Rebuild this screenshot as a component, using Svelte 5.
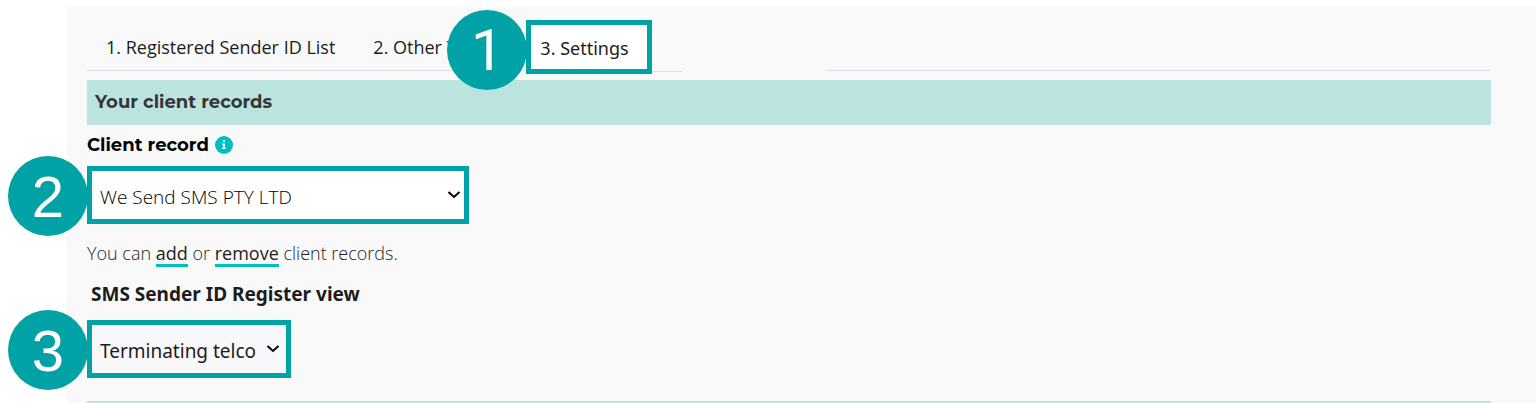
<script>
    let client = 'We Send SMS PTY LTD';
    let view = 'Terminating telco';

    const tabs = ['1. Registered Sender ID List', '2. Other T'];
</script>

<main>
    <nav>
        {#each tabs as tab}
            <button class="tab" type="button">{tab}</button>
        {/each}
        <div class="step">
            <span class="badge narrow">1</span>
            <button class="tab active" type="button">3. Settings</button>
        </div>
        <span class="line short"></span>
        <span class="line"></span>
    </nav>

    <h2>Your client records</h2>

    <div class="label">
        <label for="client">Client record</label>
        <svg width="18" height="18" viewBox="0 0 18 18" role="img" aria-label="Information">
            <circle cx="9" cy="9" r="9" fill="#00bfc0" />
            <path d="M8 4h2v2H8zM7 7.5h3v4.3h1V13H7v-1.2h1V8.7H7z" fill="#e8fafa" />
        </svg>
    </div>

    <div class="step client">
        <span class="badge">2</span>
        <select id="client" bind:value={client}>
            <option>We Send SMS PTY LTD</option>
        </select>
        <svg class="chevron" width="14" height="10" viewBox="0 0 14 10">
            <path d="M1.5 2l5.5 5 5.5-5" />
        </svg>
    </div>

    <p>You can <a href="#add">add</a> or <a href="#remove">remove</a> client records.</p>

    <label class="viewlabel" for="view">SMS Sender ID Register view</label>

    <div class="step view">
        <span class="badge">3</span>
        <select id="view" bind:value={view}>
            <option>Terminating telco</option>
        </select>
        <svg class="chevron" width="14" height="10" viewBox="0 0 14 10">
            <path d="M1.5 2l5.5 5 5.5-5" />
        </svg>
    </div>

    <hr />
</main>

<style>
    :global(body) {
        background: #fff;
    }

    main {
        margin: 7px 0 0 67px;
        padding: 13px 45px 0 20px;
        background: #f9f9f9;
        color: #1c1c1c;
        font-family: "Open Sans", "Noto Sans", sans-serif;
        font-size: 18px;
        line-height: 24px;
    }

    nav {
        display: flex;
        align-items: flex-start;
        height: 60px;
    }

    .tab {
        height: 51px;
        padding: 4px 19px 0;
        border: 0;
        border-bottom: 1px solid #dedee6;
        background: none;
        color: inherit;
        font: inherit;
        white-space: nowrap;
    }

    nav > .tab:nth-child(2) {
        width: 172px;
        text-align: left;
    }

    .step {
        position: relative;
        z-index: 0;
        width: fit-content;
    }

    .tab.active {
        display: block;
        width: 126px;
        height: 54px;
        padding: 2px 0 0 9px;
        border: 5px solid #00a2a6;
        background: #fff;
        font-family: "Noto Sans", sans-serif;
        text-align: left;
    }

    /* numbered circle hanging off the left edge of the outlined control */
    .badge {
        position: absolute;
        z-index: -1;
        top: -10px;
        right: calc(100% - 1px);
        width: 80px;
        height: 80px;
        border-radius: 50%;
        background: #00a2a6;
        color: #fff;
        font-family: "Liberation Sans", Arial, sans-serif;
        font-size: 58px;
        line-height: 82px;
        text-align: center;
    }

    .badge.narrow {
        font-family: Roboto, sans-serif;
        line-height: 80px;
    }

    .line {
        flex: 1;
        height: 50px;
        border-bottom: 1px solid #dedee6;
    }

    .line.short {
        flex: none;
        width: 30px;
        height: 51px;
        margin-right: 144px;
    }

    h2 {
        margin: 0;
        padding: 0 8px;
        background: #bbe4e1;
        color: #363636;
        font-family: Montserrat, Inter, sans-serif;
        font-size: 18px;
        font-weight: 700;
        line-height: 45px;
    }

    .label {
        display: flex;
        align-items: center;
        gap: 6px;
        height: 39px;
        margin-bottom: 2px;
        color: #000;
        font-family: Montserrat, Inter, sans-serif;
        font-weight: 700;
    }

    select {
        display: block;
        width: 100%;
        height: 58px;
        padding: 4px 32px 0 8px;
        border: 5px solid #00a2a6;
        border-radius: 0;
        background: #fff;
        color: #000;
        font: inherit;
        font-size: 19px;
        font-weight: 300;
        appearance: none;
    }

    .client {
        width: 382px;
    }

    .view {
        width: 204px;
    }

    .view select {
        padding-right: 24px;
        background: #f8f7fa;
        color: #1c1c1c;
        font-family: "Noto Sans", sans-serif;
        font-weight: 400;
    }

    .chevron {
        position: absolute;
        top: 24px;
        right: 8px;
        fill: none;
        stroke: #000;
        stroke-width: 2;
        pointer-events: none;
    }

    .view .chevron {
        right: 11px;
    }

    p {
        margin: 17px 0 15px;
        font-weight: 300;
    }

    a {
        display: inline-block;
        border-bottom: 3px solid #00bfc0;
        color: inherit;
        font-weight: 400;
        line-height: 22px;
        text-decoration: none;
    }

    .viewlabel {
        display: block;
        margin: 0 4px 14px;
        font-family: "Noto Sans", sans-serif;
        font-size: 19px;
        font-weight: 700;
    }

    hr {
        height: 2px;
        margin: 23px 0 0;
        border: 0;
        background: #bbe4e1;
    }
</style>
